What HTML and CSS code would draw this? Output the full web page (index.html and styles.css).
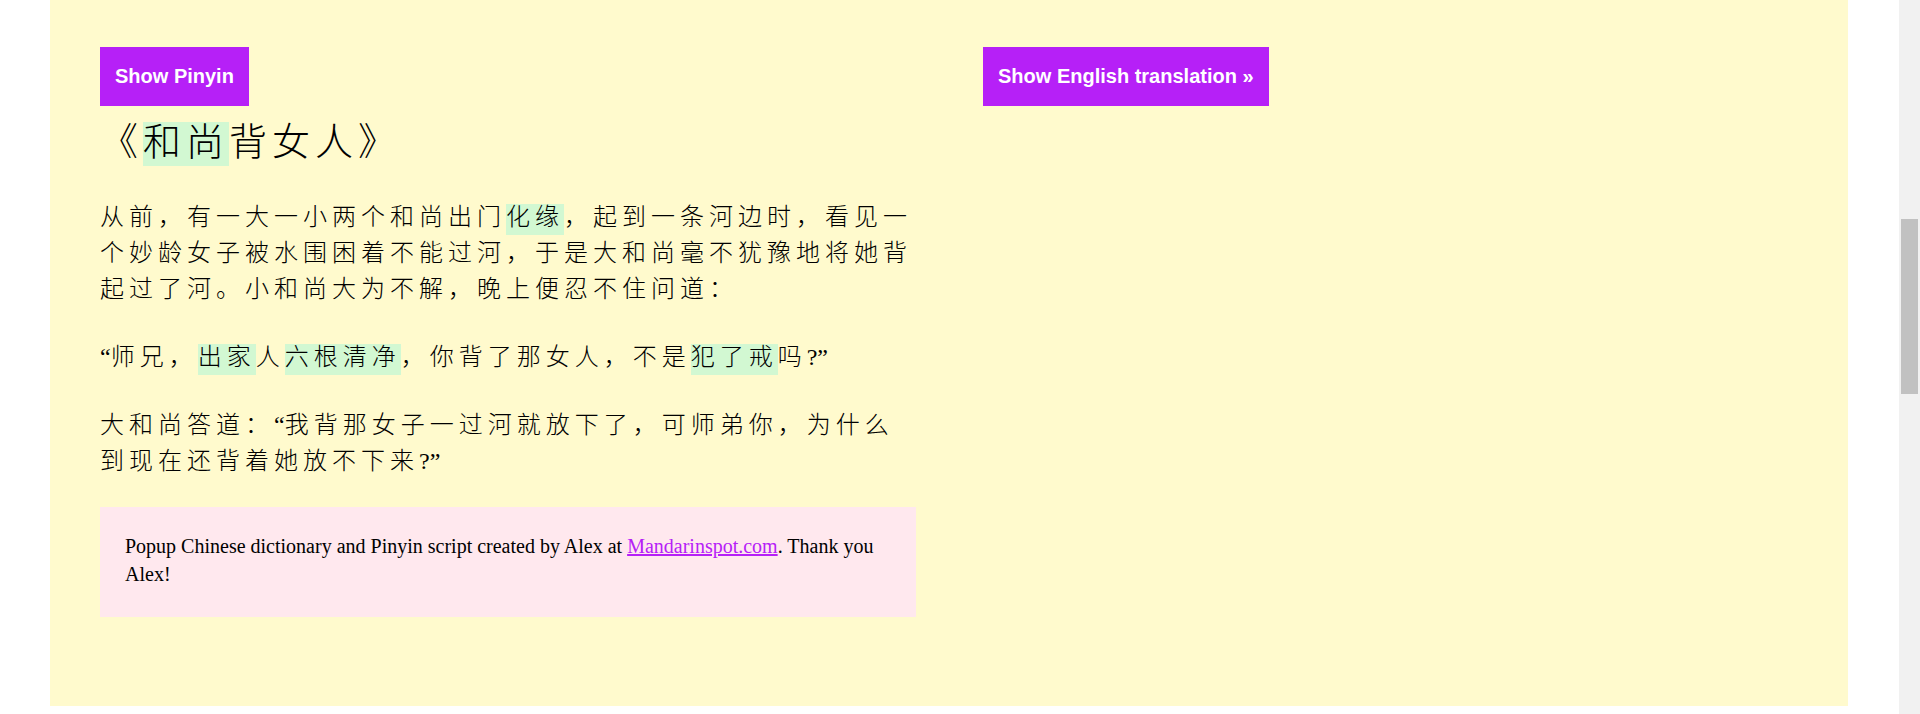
FILE: index.html
```html
<!DOCTYPE html>
<html lang="zh">
<head>
<meta charset="utf-8">
<title>和尚背女人</title>
<link rel="stylesheet" href="styles.css">
</head>
<body>
<div class="viewport">
  <div class="page">
    <main class="panel">
      <section class="col-left">
        <button class="btn" type="button">Show Pinyin</button>
        <h1 class="title">《<span class="hl">和尚</span>背女人》</h1>
        <div class="story">
          <p>从前，有一大一小两个和尚出门<span class="hl">化缘</span>，起到一条河边时，看见一个妙龄女子被水围困着不能过河，于是大和尚毫不犹豫地将她背起过了河。小和尚大为不解，晚上便忍不住问道：</p>
          <p><span class="lat">“</span>师兄，<span class="hl">出家</span>人<span class="hl">六根清净</span>，你背了那女人，不是<span class="hl">犯了戒</span>吗<span class="lat">?”</span></p>
          <p>大和尚答道：<span class="lat">“</span>我背那女子一过河就放下了，可师弟你，为什么到现在还背着她放不下来<span class="lat">?”</span></p>
        </div>
        <div class="credit">Popup Chinese dictionary and Pinyin script created by Alex at <a href="#">Mandarinspot.com</a>. Thank you Alex!</div>
      </section>
      <section class="col-right">
        <button class="btn" type="button">Show English translation »</button>
      </section>
    </main>
  </div>
  <div class="scrollbar"><div class="thumb"></div></div>
</div>
</body>
</html>
```

FILE: styles.css
```css
html, body {
  margin: 0;
  padding: 0;
}

body {
  background: #ffffff;
  color: #000000;
  font-family: "Liberation Serif", "Noto Sans CJK SC", serif;
}

.viewport {
  display: flex;
  height: 714px;
  overflow: hidden;
}

.page {
  flex: 1;
  display: flex;
  flex-direction: column;
  padding: 0 51px 8px 50px;
}

.panel {
  flex: 1;
  background: #fffacd;
  display: grid;
  grid-template-columns: 816px 1fr;
  column-gap: 67px;
  align-items: start;
  padding: 47px 50px 0 50px;
}

.btn {
  display: block;
  border: 0;
  margin: 0;
  padding: 18px 15px;
  background: #b620f7;
  color: #ffffff;
  font-family: "Liberation Sans", Arial, sans-serif;
  font-weight: bold;
  font-size: 20px;
  line-height: 23px;
  cursor: pointer;
}

.title {
  margin: 8px 0 28px 0;
  font-size: 38px;
  font-weight: 300;
  line-height: 57px;
  letter-spacing: 5px;
  text-spacing-trim: space-all;
}

.hl {
  display: inline-block;
  background: #d2f8d2;
  line-height: 27px;
  padding-bottom: 4px;
}

.title .hl {
  line-height: 41px;
  padding-bottom: 3px;
}

.story p {
  margin: 0 0 32px 0;
  font-size: 24px;
  font-weight: 300;
  line-height: 36px;
  letter-spacing: 5px;
  text-spacing-trim: space-all;
}

.story .lat {
  letter-spacing: 0;
}

.story p:last-child {
  margin-bottom: 28px;
}

.credit {
  background: #ffe8ee;
  padding: 25px 25px 29px 25px;
  font-size: 20px;
  line-height: 28px;
}

.credit a {
  color: #b620f7;
  text-decoration: underline;
}

.scrollbar {
  flex: none;
  width: 21px;
  background: #f1f1f1;
}

.thumb {
  margin: 219px 2px 0 2px;
  height: 175px;
  background: #c1c1c1;
}
```
